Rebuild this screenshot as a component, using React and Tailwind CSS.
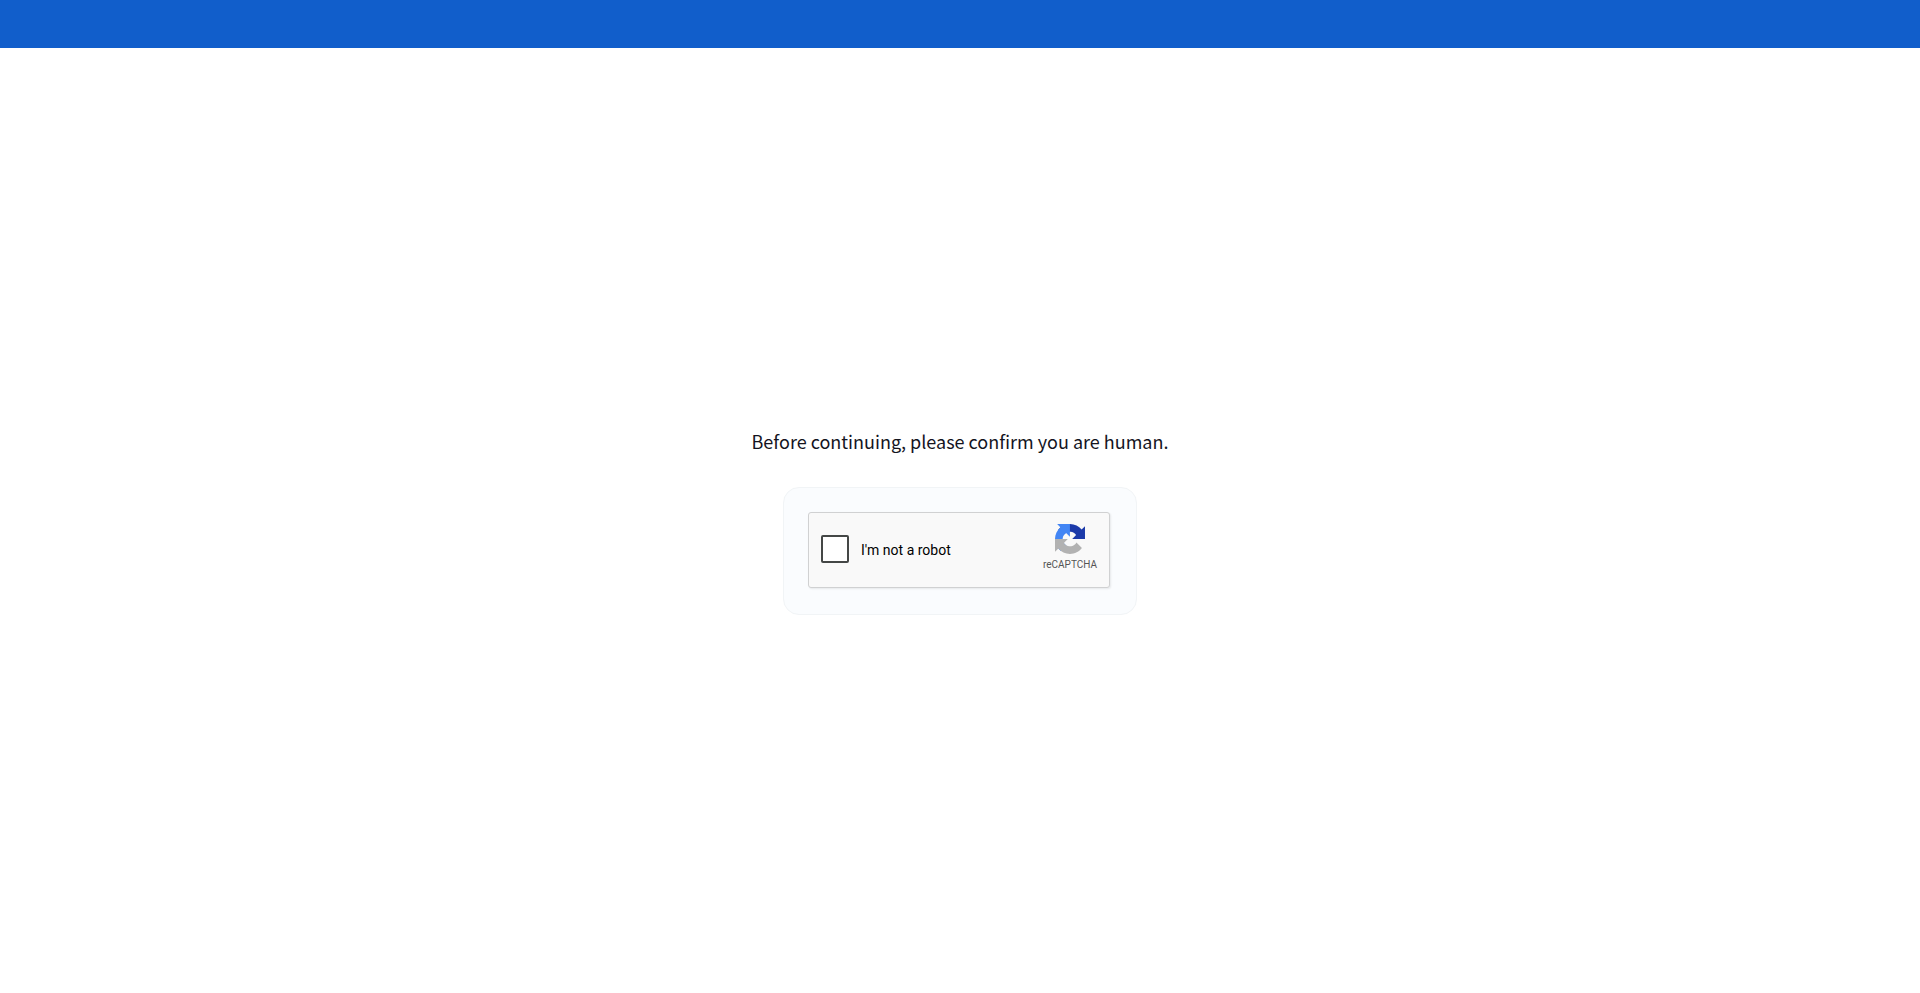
import React, { useState } from 'react'

function RecaptchaLogo() {
  return (
    <svg viewBox="0 0 64 64" className="h-[30px] w-[30px]" aria-hidden="true">
      <path
        fill="#1c3aa9"
        d="M64 31.955l-.033-1.37V4.687l-7.16 7.16C50.948 4.674 42.033.093 32.05.093c-10.4 0-19.622 4.96-25.458 12.64l11.736 11.86a15.55 15.55 0 0 1 4.754-5.334c2.05-1.6 4.952-2.906 8.968-2.906.485 0 .86.057 1.135.163 4.976.393 9.288 3.14 11.828 7.124l-8.307 8.307L64 31.953"
      />
      <path
        fill="#4285f4"
        d="M31.862.094l-1.37.033H4.594l7.16 7.16C4.58 13.147 0 22.06 0 32.046c0 10.4 4.96 19.622 12.64 25.458L24.5 45.768a15.55 15.55 0 0 1-5.334-4.754c-1.6-2.05-2.906-4.952-2.906-8.968 0-.485.057-.86.163-1.135.393-4.976 3.14-9.288 7.124-11.828l8.307 8.307L31.86.095"
      />
      <path
        fill="#b2b2b2"
        d="M.001 32.045l.033 1.37v25.898l7.16-7.16c5.86 7.173 14.774 11.754 24.76 11.754 10.4 0 19.622-4.96 25.458-12.64l-11.736-11.86a15.55 15.55 0 0 1-4.754 5.334c-2.05 1.6-4.952 2.906-8.968 2.906-.485 0-.86-.057-1.135-.163-4.976-.393-9.288-3.14-11.828-7.124l8.307-8.307c-10.522.04-22.4.066-27.295-.005"
      />
    </svg>
  )
}

function RecaptchaWidget() {
  const [checked, setChecked] = useState(false)

  return (
    <div className="mr-0.5 mb-0.5 flex h-[76px] w-[302px] justify-between rounded-[3px] border border-[#d0d1d2] bg-[#f9f9f9] px-3 font-['Roboto',sans-serif] shadow-[1px_1px_2px_0_rgba(0,0,0,0.08)]">
      <div className="flex items-center gap-3 pb-0.5">
        <input
          id="not-a-robot"
          type="checkbox"
          checked={checked}
          onChange={(e) => setChecked(e.target.checked)}
          className="h-7 w-7 cursor-pointer appearance-none rounded-[2px] border-2 border-[#444746] bg-white checked:bg-[#4285f4]"
        />
        <label htmlFor="not-a-robot" className="cursor-pointer pt-0.5 text-sm text-black">
          I'm not a robot
        </label>
      </div>
      <div className="flex flex-col items-center pt-[11px]">
        <RecaptchaLogo />
        <p className="mt-[5px] text-[10px] leading-3 text-[#555555]">reCAPTCHA</p>
      </div>
    </div>
  )
}

export default function App() {
  return (
    <div className="flex min-h-screen flex-col bg-white">
      <header className="h-12 bg-[#115ecb]" />

      <main className="flex flex-1 flex-col items-center justify-center px-4">
        <h1 className="mb-[30px] text-center font-['Noto_Sans_CJK_JP',sans-serif] text-lg leading-[31px] text-[#14141e]">
          Before continuing, please confirm you are human.
        </h1>
        <div className="rounded-2xl border border-[#f1f4f6] bg-[#fafcfe] p-6">
          <RecaptchaWidget />
        </div>
      </main>
    </div>
  )
}
